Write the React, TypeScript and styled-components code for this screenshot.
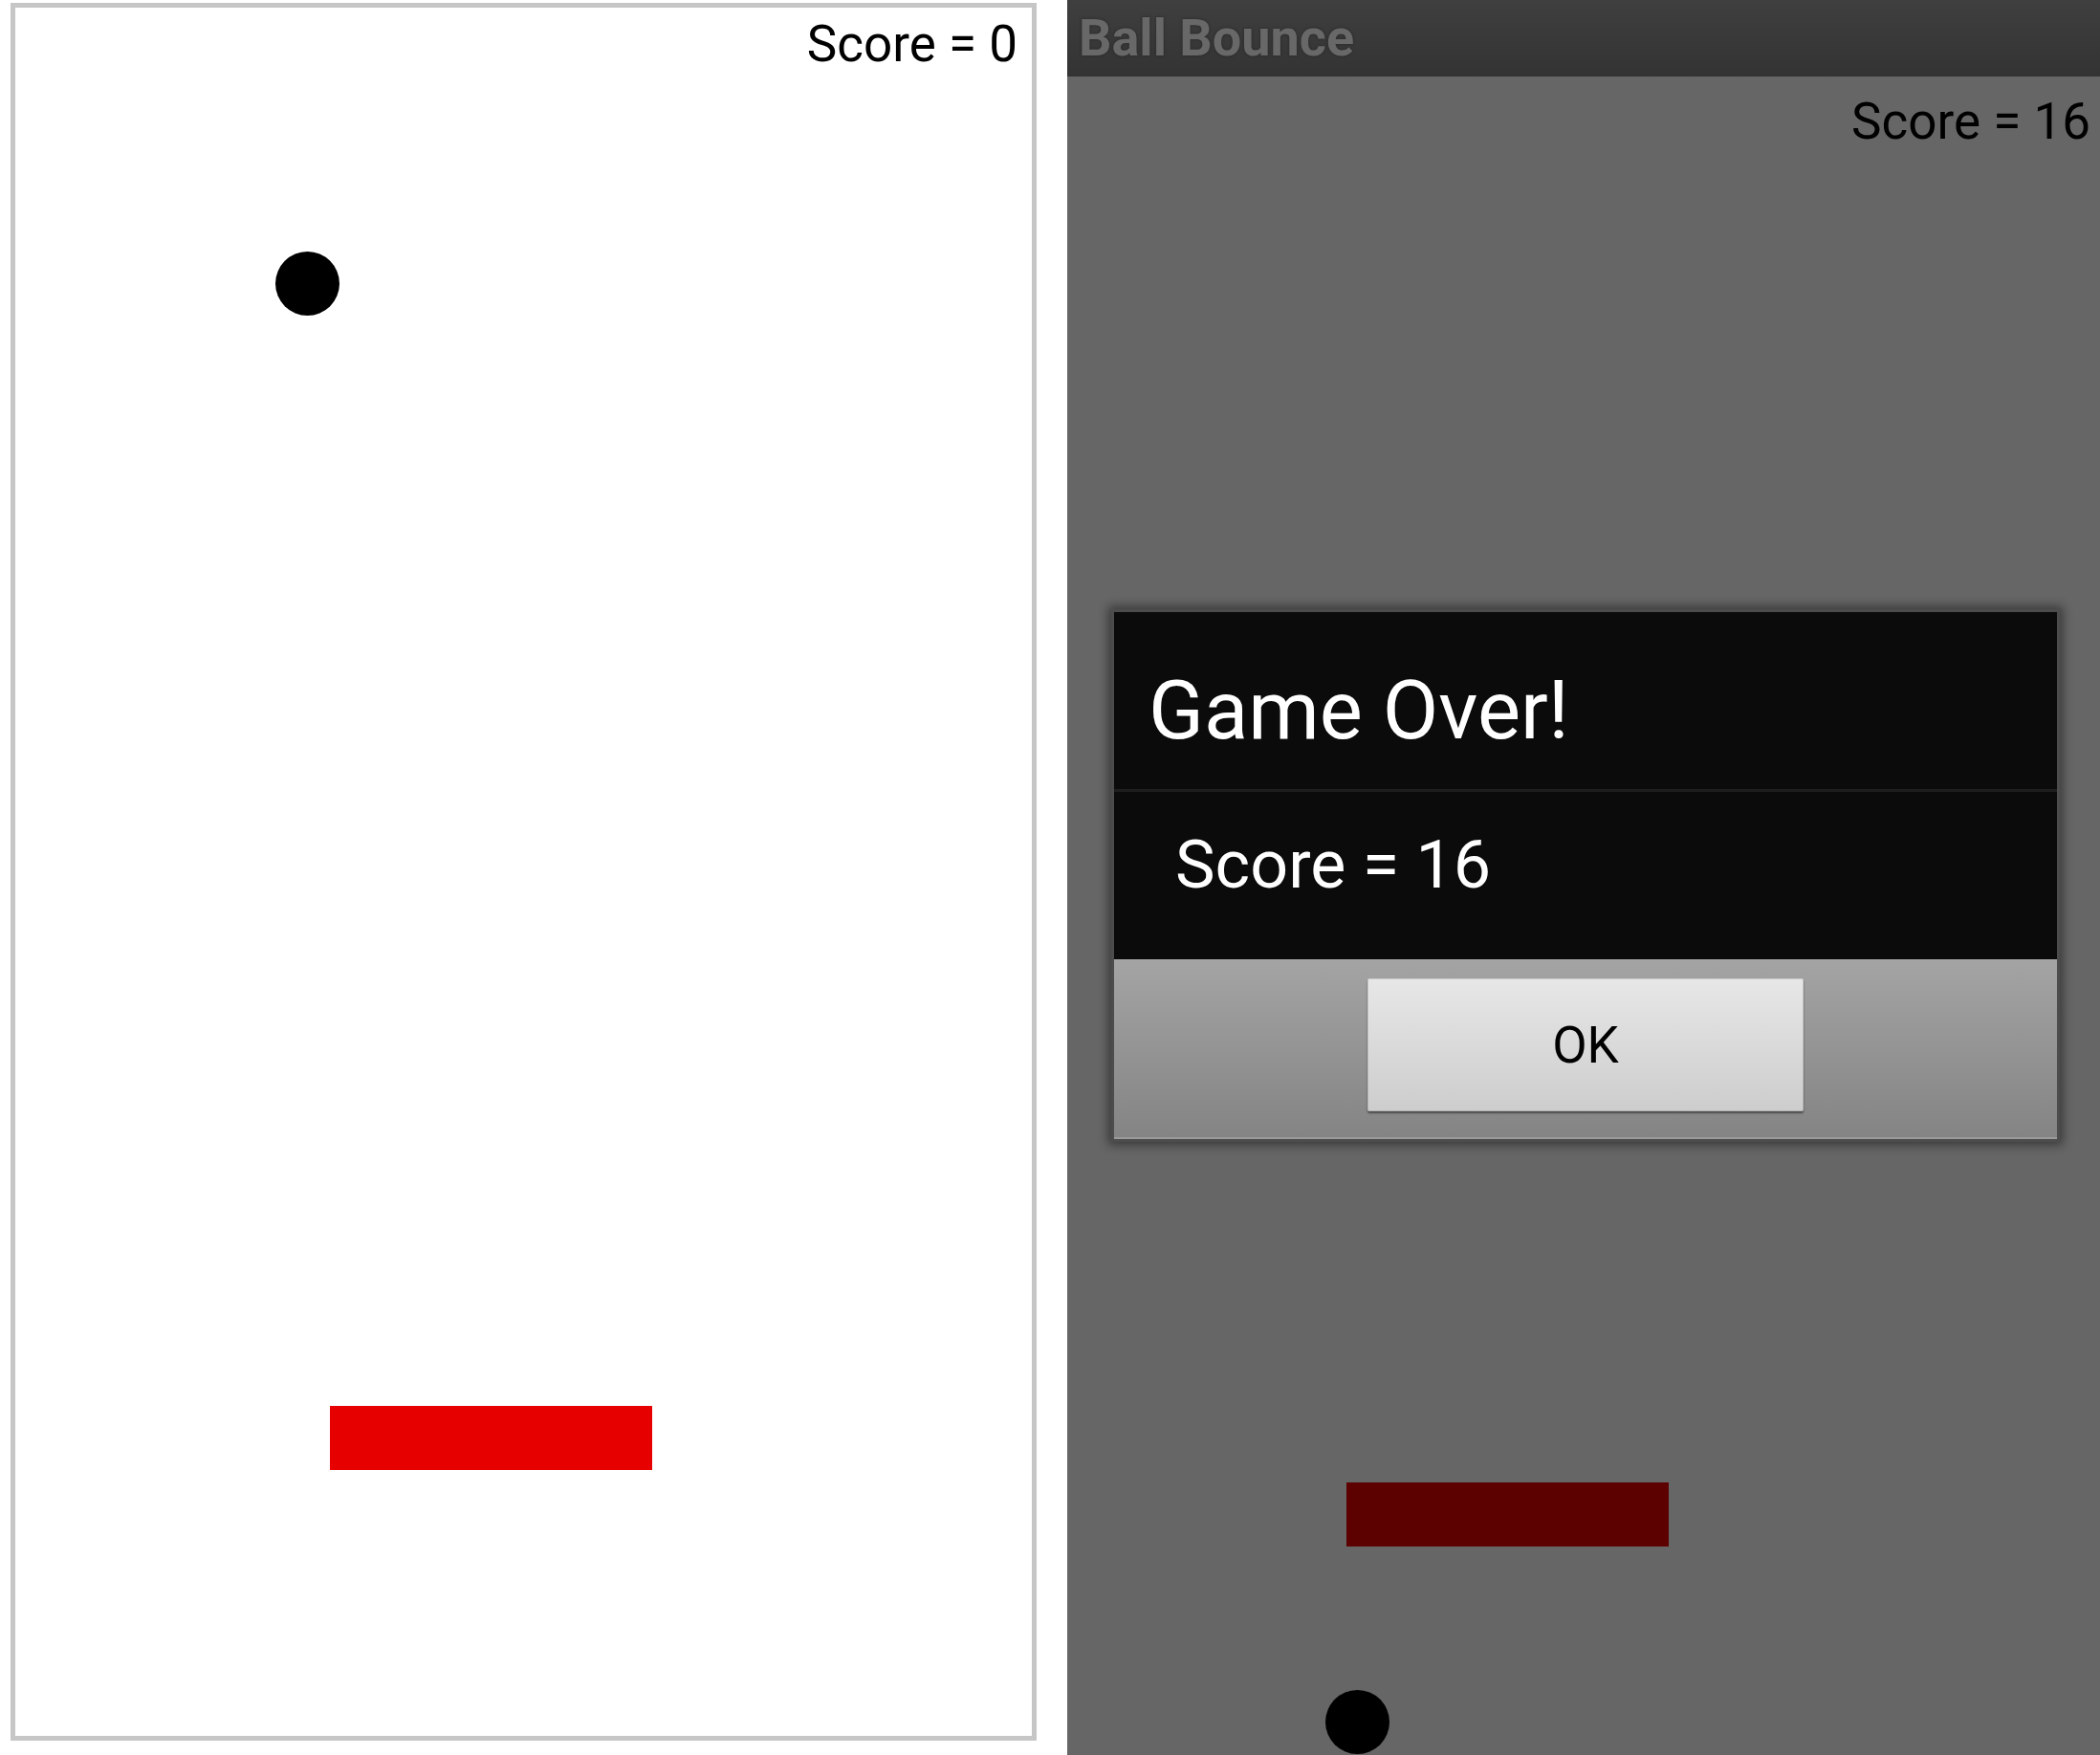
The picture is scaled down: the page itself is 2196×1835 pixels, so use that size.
import React from "react";
import styled, { createGlobalStyle } from "styled-components";

const GlobalStyle = createGlobalStyle`
  html, body {
    margin: 0;
    padding: 0;
    background: #ffffff;
    font-family: Roboto, "Liberation Sans", Arial, sans-serif;
  }
  * { box-sizing: border-box; }
`;

const Page = styled.div`
  display: flex;
  align-items: flex-start;
  width: 2196px;
  height: 1835px;
  overflow: hidden;
  background: #ffffff;
`;

const LeftScreen = styled.div`
  margin: 3px 0 0 11px;
  width: 1073px;
  height: 1817px;
  border: 5px solid #c6c6c6;
  background: #ffffff;
  position: relative;
  flex: none;
`;

const RightScreen = styled.div`
  margin-left: 32px;
  width: 1080px;
  height: 1835px;
  background: #666666;
  display: flex;
  flex-direction: column;
  position: relative;
  flex: none;
`;

const TitleBar = styled.div`
  height: 80px;
  flex: none;
  display: flex;
  align-items: center;
  padding-left: 12px;
  background: linear-gradient(#3f3f3f, #333333);
`;

const TitleText = styled.span`
  font-family: Roboto, "Liberation Sans", sans-serif;
  font-weight: 700;
  font-size: 54px;
  line-height: 1;
  color: #686868;
  text-shadow: 0 0 3px #262626;
  margin-top: -1px;
`;

const Canvas = styled.div`
  position: relative;
  flex: 1;
`;

const ScoreLabel = styled.div<{ $top: number; $right: number }>`
  text-align: right;
  font-size: 53px;
  line-height: 1;
  color: #000000;
  padding-top: ${(p) => p.$top}px;
  padding-right: ${(p) => p.$right}px;
`;

const Ball = styled.div`
  position: absolute;
  width: 67px;
  height: 67px;
  border-radius: 50%;
  background: #000000;
`;

const Paddle = styled.div<{ $color: string }>`
  position: absolute;
  width: 337px;
  height: 67px;
  background: ${(p) => p.$color};
`;

const Dialog = styled.div`
  position: absolute;
  left: 46px;
  top: 637px;
  width: 992px;
  height: 557px;
  display: flex;
  flex-direction: column;
  border: 3px solid #4c4c4c;
  box-shadow: 0 0 10px 3px rgba(0, 0, 0, 0.45);
  background: #0b0b0b;
`;

const DialogTitle = styled.div`
  height: 188px;
  flex: none;
  padding: 61px 0 0 36px;
  font-size: 85px;
  line-height: 1;
  color: #ffffff;
  border-bottom: 3px solid #1e1e1e;
`;

const DialogMessage = styled.div`
  height: 175px;
  flex: none;
  padding: 41px 0 0 64px;
  font-size: 70px;
  line-height: 1;
  color: #ffffff;
`;

const ButtonBar = styled.div`
  flex: 1;
  display: flex;
  justify-content: center;
  padding-top: 20px;
  background: linear-gradient(#a4a4a4, #848484);
  border-bottom: 2px solid #9a9a9a;
`;

const OkButton = styled.button`
  width: 456px;
  height: 139px;
  border: none;
  border-radius: 2px;
  background: linear-gradient(#e7e7e7, #cdcdcd);
  box-shadow: 0 2px 2px rgba(0, 0, 0, 0.45), inset 0 0 0 1px rgba(0, 0, 0, 0.12);
  font-family: Roboto, "Liberation Sans", sans-serif;
  font-size: 53px;
  color: #000000;
  cursor: pointer;
  padding: 0;
`;

export default function App() {
  return (
    <>
      <GlobalStyle />
      <Page>
        <LeftScreen>
          <ScoreLabel $top={12} $right={15}>
            Score = 0
          </ScoreLabel>
          <Ball style={{ left: 272, top: 255 }} />
          <Paddle $color="#e60000" style={{ left: 329, top: 1462 }} />
        </LeftScreen>
        <RightScreen>
          <TitleBar>
            <TitleText>Ball Bounce</TitleText>
          </TitleBar>
          <Canvas>
            <ScoreLabel $top={21} $right={10}>
              Score = 16
            </ScoreLabel>
            <Paddle $color="#5c0000" style={{ left: 292, top: 1470 }} />
            <Ball style={{ left: 270, top: 1687 }} />
          </Canvas>
          <Dialog>
            <DialogTitle>Game Over!</DialogTitle>
            <DialogMessage>Score = 16</DialogMessage>
            <ButtonBar>
              <OkButton>OK</OkButton>
            </ButtonBar>
          </Dialog>
        </RightScreen>
      </Page>
    </>
  );
}
